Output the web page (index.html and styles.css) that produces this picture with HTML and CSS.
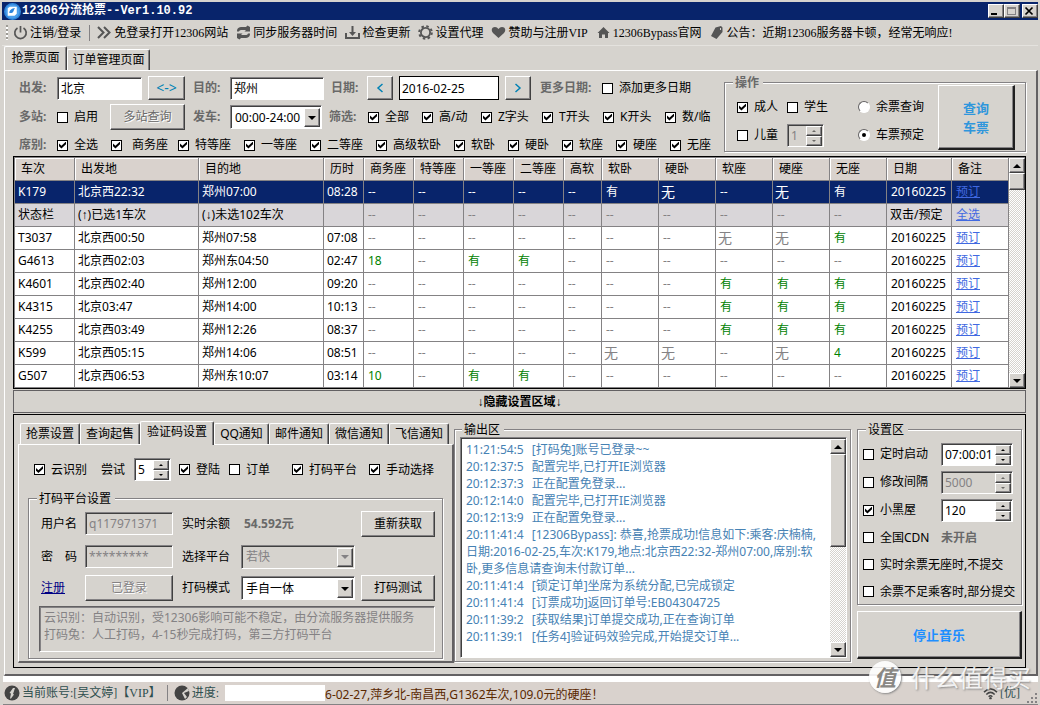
FILE: index.html
```html
<!DOCTYPE html>
<html lang="zh-CN">
<head>
<meta charset="utf-8">
<title>12306分流抢票--Ver1.10.92</title>
<link rel="stylesheet" href="styles.css">
</head>
<body>
<div class="window">
<header class="titlebar">
<svg class="app-icon" viewBox="0 0 16 16"><circle cx="8" cy="8" r="8" fill="#2f86dc"/><circle cx="8" cy="8" r="6.5" fill="#4b9eea"/><path d="M3.500 5l2-1.500H12v6.500l-2 2H3.500z" fill="#fff"/><path d="M5 9.500C5 7 7 5 10.500 5 9 6 9.500 9 7 9.500z" fill="#2f86dc"/></svg>
<h1>12306分流抢票--Ver1.10.92</h1>
<div class="win-buttons">
<button class="win-btn" aria-label="最小化"><svg viewBox="0 0 12 10"><path d="M2 7h6v2H2z"/></svg></button>
<button class="win-btn" aria-label="最大化" disabled><svg viewBox="0 0 12 10"><path d="M2 1h9v8H2zM3 3v5h7V3z" fill="#848284" fill-rule="evenodd"/></svg></button>
<button class="win-btn close" aria-label="关闭"><svg viewBox="0 0 12 10"><path d="M2.500 1.500l7 7M9.500 1.500l-7 7" stroke="#000" stroke-width="1.700"/></svg></button>
</div>
</header>
<nav class="toolbar">
<span class="grip"></span>
<button class="tool"><svg viewBox="0 0 15 15"><path d="M4.500 3a5.700 5.700 0 1 0 6 0M7.500 1v6.500" fill="none" stroke="#555" stroke-width="1.700"/></svg>注销/登录</button>
<span class="sep"></span>
<button class="tool"><svg viewBox="0 0 15 15"><path d="M1 2l5.500 5.500L1 13M7 2l5.500 5.500L7 13" fill="none" stroke="#555" stroke-width="2"/></svg>免登录打开12306网站</button>
<button class="tool"><svg viewBox="0 0 15 15"><path d="M1 6.500C1 3 3 2 6 2h4l1.500-1.500L14 2v4.500H8.500L10 5H6C4 5 3.500 5.500 3 6.500zM14 8.500c0 3.500-2 4.500-5 4.500H5l-1.500 1.500L1 13V8.500h5.500L5 10h4c2 0 2.500-.5 3-1.500z" fill="#555"/></svg>同步服务器时间</button>
<button class="tool"><svg viewBox="0 0 15 15"><path d="M6.500 1h2v6H11l-3.500 4L4 7h2.500zM0 8h2v4h11V8h2v6H0z" fill="#555"/></svg>检查更新</button>
<button class="tool"><svg viewBox="0 0 15 15"><circle cx="7.500" cy="7.500" r="4.600" fill="none" stroke="#555" stroke-width="1.800"/><circle cx="7.500" cy="7.500" r="6.300" fill="none" stroke="#555" stroke-width="2" stroke-dasharray="2.500 2.450"/></svg>设置代理</button>
<button class="tool"><svg viewBox="0 0 15 15"><path d="M7.500 13L2 8C-.5 5 1 2 4 2c1.500 0 2.500.7 3.500 2C8.500 2.700 9.500 2 11 2c3 0 4.500 3 2 6z" fill="#555"/></svg>赞助与注册VIP</button>
<button class="tool"><svg viewBox="0 0 15 15"><path d="M7.500 2L13.500 8H12v5H9V9.500H6V13H3V8H1.500z" fill="#555"/></svg>12306Bypass官网</button>
<button class="tool"><svg viewBox="0 0 15 15"><path d="M6.500 2.500L12 1l1.500 1.500V7L7.500 14 2 11z M11 3v2h1V3z" fill="#555" fill-rule="evenodd"/></svg>公告：近期12306服务器卡顿，经常无响应!</button>
</nav>
<div class="tabs main-tabs" role="tablist">
<button class="tab active" role="tab" aria-selected="true">抢票页面</button>
<button class="tab" role="tab">订单管理页面</button>
</div>
<main class="page">
<section class="filters">
<form class="filter-rows">
<div class="row row-route">
<label class="cap" for="from">出发:</label><input id="from" class="sunk w-city" value="北京">
<button type="button" class="btn swap">&lt;-&gt;</button>
<label class="cap" for="to">目的:</label><input id="to" class="sunk w-dest" value="郑州">
<label class="cap" for="date">日期:</label><button type="button" class="btn step" aria-label="前一天"><svg viewBox="0 0 8 10"><path d="M6.500 1L2 5l4.500 4"/></svg></button>
<input id="date" class="date" value="2016-02-25">
<button type="button" class="btn step" aria-label="后一天"><svg viewBox="0 0 8 10"><path d="M1.500 1L6 5 1.500 9"/></svg></button>
<span class="cap">更多日期:</span><label class="check"><input type="checkbox">添加更多日期</label>
</div>
<div class="row row-time">
<span class="cap">多站:</span><label class="check"><input type="checkbox">启用</label>
<button type="button" class="btn multi" disabled>多站查询</button>
<label class="cap" for="depart">发车:</label>
<span class="combo"><select id="depart"><option>00:00-24:00</option></select><i class="drop"></i></span>
<span class="cap">筛选:</span>
<label class="check"><input type="checkbox" checked>全部</label><label class="check"><input type="checkbox" checked>高/动</label><label class="check"><input type="checkbox" checked>Z字头</label><label class="check"><input type="checkbox" checked>T开头</label><label class="check"><input type="checkbox" checked>K开头</label><label class="check"><input type="checkbox" checked>数/临</label>
</div>
<div class="row row-seat">
<span class="cap">席别:</span>
<label class="check"><input type="checkbox" checked>全选</label><label class="check wide"><input type="checkbox" checked>商务座</label><label class="check"><input type="checkbox" checked>特等座</label><label class="check"><input type="checkbox" checked>一等座</label><label class="check"><input type="checkbox" checked>二等座</label><label class="check"><input type="checkbox" checked>高级软卧</label><label class="check"><input type="checkbox" checked>软卧</label><label class="check"><input type="checkbox" checked>硬卧</label><label class="check"><input type="checkbox" checked>软座</label><label class="check"><input type="checkbox" checked>硬座</label><label class="check"><input type="checkbox" checked>无座</label>
</div>
</form>
<fieldset class="group actions">
<legend class="gray">操作</legend>
<div class="action-grid">
<label class="check"><input type="checkbox" checked>成人</label><label class="check"><input type="checkbox">学生</label><label class="radio"><input type="radio" name="mode">余票查询</label>
<label class="check"><input type="checkbox">儿童</label><span class="spin off"><input value="1" disabled aria-label="儿童人数"><span class="arrows"><button aria-label="加"></button><button aria-label="减"></button></span></span><label class="radio"><input type="radio" name="mode" checked>车票预定</label>
</div>
<button class="btn query">查询<br>车票</button>
</fieldset>
</section>

<section class="grid-box">
<table class="trains">
<colgroup><col class="c60"><col class="c124"><col class="c125"><col class="c40"><col class="c50"><col class="c50"><col class="c50"><col class="c50"><col class="c38"><col class="c57"><col class="c57"><col class="c57"><col class="c57"><col class="c57"><col class="c65"><col class="c57"></colgroup>
<thead><tr><th>车次<th>出发地<th>目的地<th>历时<th>商务座<th>特等座<th>一等座<th>二等座<th>高软<th>软卧<th>硬卧<th>软座<th>硬座<th>无座<th>日期<th>备注</tr></thead>
<tbody>
<tr class="selected"><td>K179<td>北京西22:32<td>郑州07:00<td>08:28<td>--<td>--<td>--<td>--<td>--<td class="yes">有<td class="none">无<td>--<td class="none">无<td class="yes">有<td>20160225<td><a href="#">预订</a></tr>
<tr class="status"><td>状态栏<td>(↑)已选1车次<td>(↓)未选102车次<td><td class="na">--<td class="na">--<td class="na">--<td class="na">--<td class="na">--<td class="na">--<td class="na">--<td class="na">--<td class="na">--<td class="na">--<td class="tight">双击/预定<td><a href="#">全选</a></tr>
<tr><td>T3037<td>北京西00:50<td>郑州07:58<td>07:08<td class="na">--<td class="na">--<td class="na">--<td class="na">--<td class="na">--<td class="na">--<td class="na">--<td class="none">无<td class="none">无<td class="yes">有<td>20160225<td><a href="#">预订</a></tr>
<tr><td>G4613<td>北京西02:03<td>郑州东04:50<td>02:47<td class="yes">18<td class="na">--<td class="yes">有<td class="yes">有<td class="na">--<td class="na">--<td class="na">--<td class="na">--<td class="na">--<td class="na">--<td>20160225<td><a href="#">预订</a></tr>
<tr><td>K4601<td>北京西02:40<td>郑州12:00<td>09:20<td class="na">--<td class="na">--<td class="na">--<td class="na">--<td class="na">--<td class="na">--<td class="na">--<td class="yes">有<td class="yes">有<td class="yes">有<td>20160225<td><a href="#">预订</a></tr>
<tr><td>K4315<td>北京03:47<td>郑州14:00<td>10:13<td class="na">--<td class="na">--<td class="na">--<td class="na">--<td class="na">--<td class="na">--<td class="na">--<td class="yes">有<td class="yes">有<td class="yes">有<td>20160225<td><a href="#">预订</a></tr>
<tr><td>K4255<td>北京西03:49<td>郑州12:26<td>08:37<td class="na">--<td class="na">--<td class="na">--<td class="na">--<td class="na">--<td class="na">--<td class="na">--<td class="yes">有<td class="yes">有<td class="yes">有<td>20160225<td><a href="#">预订</a></tr>
<tr><td>K599<td>北京西05:15<td>郑州14:06<td>08:51<td class="na">--<td class="na">--<td class="na">--<td class="na">--<td class="na">--<td class="none">无<td class="none">无<td class="na">--<td class="none">无<td class="yes">4<td>20160225<td><a href="#">预订</a></tr>
<tr><td>G507<td>北京西06:53<td>郑州东10:07<td>03:14<td class="yes">10<td class="na">--<td class="yes">有<td class="yes">有<td class="na">--<td class="na">--<td class="na">--<td class="na">--<td class="na">--<td class="na">--<td>20160225<td><a href="#">预订</a></tr>
</tbody>
</table>
<div class="scrollbar"><button class="sb up" aria-label="向上"></button><span class="thumb short"></span><button class="sb down" aria-label="向下"></button></div>
</section>

<button class="collapse">↓隐藏设置区域↓</button>

<section class="bottom">
<div class="settings-tabs">
<div class="tabs sub-tabs" role="tablist">
<button class="tab" role="tab">抢票设置</button><button class="tab" role="tab">查询起售</button><button class="tab active" role="tab" aria-selected="true">验证码设置</button><button class="tab" role="tab">QQ通知</button><button class="tab" role="tab">邮件通知</button><button class="tab" role="tab">微信通知</button><button class="tab" role="tab">飞信通知</button>
</div>
<div class="sub-page">
<div class="row row-ocr">
<label class="check"><input type="checkbox" checked>云识别</label><label for="tries">尝试</label>
<span class="spin"><input id="tries" value="5"><span class="arrows"><button aria-label="加"></button><button aria-label="减"></button></span></span>
<label class="check"><input type="checkbox" checked>登陆</label><label class="check"><input type="checkbox">订单</label><label class="check"><input type="checkbox" checked>打码平台</label><label class="check"><input type="checkbox" checked>手动选择</label>
</div>
<fieldset class="group platform">
<legend>打码平台设置</legend>
<div class="form-grid">
<label for="user">用户名</label><input id="user" class="sunk" value="q117971371" disabled><span>实时余额</span><strong class="gray">54.592元</strong><button class="btn">重新获取</button>
<label for="pwd">密　码</label><input id="pwd" class="sunk" value="*********" disabled><label for="plat">选择平台</label><span class="combo off"><select id="plat" disabled><option>若快</option></select><i class="drop"></i></span><span></span>
<a href="#" class="register">注册</a><button class="btn" disabled>已登录</button><label for="mode">打码模式</label><span class="combo"><select id="mode"><option>手自一体</option></select><i class="drop"></i></span><button class="btn">打码测试</button>
</div>
<div class="note">云识别：自动识别，受12306影响可能不稳定，由分流服务器提供服务<br>打码兔：人工打码，4-15秒完成打码，第三方打码平台</div>
</fieldset>
</div>
</div>
<fieldset class="group output">
<legend>输出区</legend>
<div class="log-box">
<div class="log">
<p><time>11:21:54:5</time>[打码兔]账号已登录~~</p>
<p><time>20:12:37:5</time>配置完毕,已打开IE浏览器</p>
<p><time>20:12:37:3</time>正在配置免登录...</p>
<p><time>20:12:14:0</time>配置完毕,已打开IE浏览器</p>
<p><time>20:12:13:9</time>正在配置免登录...</p>
<p><time>20:11:41:4</time>[12306Bypass]: 恭喜,抢票成功!信息如下:乘客:庆楠楠,<br>日期:2016-02-25,车次:K179,地点:北京西22:32-郑州07:00,席别:软<br>卧,更多信息请查询未付款订单...</p>
<p><time>20:11:41:4</time>[锁定订单]坐席为系统分配,已完成锁定</p>
<p><time>20:11:41:4</time>[订票成功]返回订单号:EB04304725</p>
<p><time>20:11:39:2</time>[获取结果]订单提交成功,正在查询订单</p>
<p><time>20:11:39:1</time>[任务4]验证码效验完成,开始提交订单...</p>
</div>
<div class="scrollbar"><button class="sb up" aria-label="向上"></button><span class="thumb long"></span><button class="sb down" aria-label="向下"></button></div>
</div>
</fieldset>
<div class="side">
<fieldset class="group options">
<legend>设置区</legend>
<div class="option"><label class="check"><input type="checkbox">定时启动</label><span class="spin"><input value="07:00:01" aria-label="启动时间"><span class="arrows"><button aria-label="加"></button><button aria-label="减"></button></span></span></div>
<div class="option"><label class="check"><input type="checkbox">修改间隔</label><span class="spin off"><input value="5000" disabled aria-label="间隔"><span class="arrows"><button aria-label="加"></button><button aria-label="减"></button></span></span></div>
<div class="option"><label class="check"><input type="checkbox" checked>小黑屋</label><span class="spin"><input value="120" aria-label="小黑屋时间"><span class="arrows"><button aria-label="加"></button><button aria-label="减"></button></span></span></div>
<div class="option low"><label class="check"><input type="checkbox">全国CDN</label><strong class="gray">未开启</strong></div>
<div class="option low"><label class="check"><input type="checkbox">实时余票无座时,不提交</label></div>
<div class="option low"><label class="check"><input type="checkbox">余票不足乘客时,部分提交</label></div>
</fieldset>
<button class="btn music">停止音乐</button>
</div>
</section>
</main>
<footer class="statusbar">
<svg class="st-icon" viewBox="0 0 16 16"><circle cx="8" cy="8" r="7.500" fill="#444"/><path d="M9 3h2L9 9l1 .5-3 4H6l1-5-1.500-.5z" fill="#d6d3ce"/></svg>
<span class="teal account">当前账号:[吴文婷]【VIP】</span><span class="sep"></span>
<svg class="st-icon" viewBox="0 0 16 16"><circle cx="8" cy="8" r="7.500" fill="#444"/><path d="M8 8l6-5 1 3-5 2 3 4-2 2z" fill="#d6d3ce"/></svg>
<span class="teal">进度:</span><span class="progress"></span>
<div class="ticker"><span>6-02-27,萍乡北-南昌西,G1362车次,109.0元的硬座！</span></div>
<svg class="wifi" viewBox="0 0 16 14"><g fill="none" stroke="#444" stroke-width="1.600"><path d="M1 5.500q7-7 14 0M3.500 8q4.500-4.500 9 0M6 10.500q2-2 4 0"/></g><circle cx="8" cy="12" r="1.300" fill="#444"/></svg>
<span class="teal">[优]</span>
<svg class="size-grip" viewBox="0 0 12 12"><path d="M9 1h2v2H9zM5 5h2v2H5zM9 5h2v2H9zM1 9h2v2H1zM5 9h2v2H5zM9 9h2v2H9z" fill="#848284"/></svg>
</footer>
<div class="watermark"><span class="mark">值</span>什么值得买</div>
</div>
</body>
</html>
```
FILE: styles.css
```css
* { box-sizing: border-box; }

body {
  margin: 0;
  background: #d6d3ce;
  color: #000;
  font: 12px/16px "Noto Sans", "Liberation Sans", "Noto Sans CJK SC", sans-serif;
}

button, input, select { font: inherit; color: inherit; margin: 0; border-radius: 0; }
button { padding: 0; }
p { margin: 0; }

.window {
  position: relative;
  display: flex;
  flex-direction: column;
  min-height: 100vh;
  padding: 2px 2px 0 2px;
}

/* title bar */
.titlebar {
  display: flex;
  align-items: center;
  height: 18px;
  padding-left: 2px;
  gap: 1px;
  background: #08246b;
  color: #fff;
}
.app-icon { width: 17px; height: 17px; }
.titlebar h1 {
  flex: 1;
  margin: 0;
  font: bold 12px/16px "Liberation Mono", "Noto Sans CJK SC", monospace;
}
.win-buttons { display: flex; }
.win-btn {
  width: 16px;
  height: 14px;
  border: 1px solid;
  border-color: #fff #404040 #404040 #fff;
  background: #d6d3ce;
  box-shadow: inset -1px -1px #848284;
}
.win-btn svg { display: block; width: 12px; height: 10px; }
.close { margin-left: 2px; }

/* toolbar */
.toolbar {
  display: flex;
  align-items: center;
  height: 26px;
  gap: 8px;
  padding-left: 4px;
  border-bottom: 1px solid #e4e2de;
  font-family: "Liberation Serif", "Noto Sans CJK SC", serif;
}
.grip { width: 2px; height: 15px; background: repeating-linear-gradient(#9c9a94 0 2px, #fff 2px 4px); margin-right: -3px; }
.tool { display: flex; align-items: center; gap: 2px; border: 0; background: none; white-space: nowrap; }
.tool svg { width: 15px; height: 15px; }
.sep { width: 1px; height: 16px; background: #848284; }
.toolbar .sep { margin-right: -1px; }

/* tabs */
.tabs { display: flex; align-items: flex-end; }
.tab {
  border: 1px solid;
  border-color: #fff #404040 transparent #fff;
  border-bottom: 0;
  background: #d6d3ce;
  box-shadow: inset -1px 0 #848284;
  border-radius: 2px 2px 0 0;
  white-space: nowrap;
}
.main-tabs { height: 24px; padding-left: 2px; }
.main-tabs .tab { height: 21px; width: 83px; }
.main-tabs .active { height: 25px; width: 63px; margin-bottom: -1px; padding-bottom: 3px; }

.page {
  display: flex;
  flex-direction: column;
  margin-left: 2px;
  padding: 5px 10px 6px 8px;
  border: solid;
  border-width: 1px 2px 2px 1px;
  border-color: #fff #636163 #636163 #fff;
}

/* filters */
.filters { display: flex; justify-content: space-between; height: 80px; }
.filter-rows { padding-left: 6px; }
.row { display: grid; align-items: center; white-space: nowrap; }
.row-route { height: 24px; grid-template-columns: 38px 91px 45px 37px 101px 36px 32px 106px 35px 62px auto; }
.row-time { height: 34px; grid-template-columns: 38px 53px 83px 37px 99px 39px 54px 59px 61px 61px 62px auto; }
.row-seat { height: 22px; grid-template-columns: 38px 54px 67px 66px 66px 66px 78px 54px 54px 54px 54px auto; }
.cap, .gray { color: #696969; font-weight: bold; }

.check, .radio { display: flex; align-items: center; gap: 6px; white-space: nowrap; }
.check.wide { gap: 10px; }
.check input {
  appearance: none;
  display: grid;
  place-items: center;
  flex: none;
  width: 11px;
  height: 11px;
  border: 1px solid #000;
  background: #fff;
}
.check input:checked::before {
  content: "";
  width: 7px;
  height: 7px;
  background: #000;
  clip-path: polygon(0 30%, 35% 62%, 100% 0, 100% 40%, 35% 100%, 0 68%);
}
.radio input {
  appearance: none;
  display: grid;
  place-items: center;
  width: 12px;
  height: 12px;
  border: 1px solid;
  border-color: #636163 #fff #fff #636163;
  border-radius: 50%;
  background: #fff;
}
.radio input:checked::before { content: ""; width: 4px; height: 4px; border-radius: 50%; background: #000; }

.sunk, .spin, .combo {
  border: 1px solid;
  border-color: #848284 #fff #fff #848284;
  box-shadow: inset 1px 1px #404040;
  background: #fff;
}
.sunk { height: 23px; min-width: 0; padding: 0 3px; }
.sunk:disabled { background: #d6d3ce; color: #848284; }
.w-city { width: 85px; }
.w-dest { width: 94px; }
.date { width: 100px; height: 24px; padding: 0 2px; border: 1px solid #000; background: #fff; }

.btn {
  height: 24px;
  border: 1px solid;
  border-color: #fff #404040 #404040 #fff;
  background: #d6d3ce;
  box-shadow: inset -1px -1px #848284;
}
.btn:disabled { color: #848284; text-shadow: 1px 1px #fff; }
.swap { width: 37px; color: #0082b5; font: 14px/16px "Noto Sans", sans-serif; }
.step { display: grid; place-items: center; width: 26px; }
.step svg { width: 8px; height: 10px; fill: none; stroke: #0082b5; stroke-width: 1.5; }
.btn.multi { width: 75px; height: 26px; color: #696969; }

.combo { display: flex; width: 92px; height: 24px; padding: 2px 1px 1px 2px; }
.combo select { appearance: none; flex: 1; min-width: 0; border: 0; background: none; padding: 0 2px; }
.combo.off { background: #d6d3ce; color: #848284; }
.combo select:disabled { opacity: 1; color: #848284; }
.drop, .sb, .thumb, .arrows button {
  display: grid;
  place-items: center;
  border: 1px solid;
  border-color: #fff #404040 #404040 #fff;
  box-shadow: inset -1px -1px #848284;
  background: #d6d3ce;
}
.drop { width: 16px; }
.drop::before, .sb::before, .arrows button::before {
  content: "";
  border: solid transparent;
  border-width: 4px 4px 0;
  border-top-color: #000;
}
.off .drop::before { border-top-color: #848284; }
.sb.up::before { border-width: 0 4px 4px; border-bottom-color: #000; }
.arrows button::before { border-width: 2px 2px 0; }
.arrows button:first-child::before { border-width: 0 2px 2px; border-bottom-color: #000; }

.spin { display: flex; width: 37px; height: 23px; padding: 1px 1px 0 1px; }
.spin > input { flex: 1; min-width: 0; width: 0; border: 0; background: none; padding: 0 2px; }
.spin.off { background: #d6d3ce; color: #848284; }
.arrows { display: flex; flex-direction: column; width: 16px; }
.arrows button { flex: 1; min-height: 0; }
.spin.off .arrows button::before { opacity: .5; }

/* group boxes */
.group {
  min-width: 0;
  margin: 0;
  padding: 0;
  border: 1px solid #848284;
  box-shadow: 1px 1px #fff, inset 1px 1px #fff;
}
.group legend { margin-left: 8px; padding: 0 4px 0 2px; background: #d6d3ce; height: 13px; line-height: 13px; }
.actions { width: 302px; height: 76px; }
.action-grid {
  float: left;
  display: grid;
  grid-template-columns: 50px 71px 80px;
  grid-template-rows: 28px 28px;
  align-items: center;
  padding: 4px 0 0 12px;
}
.query {
  float: left;
  width: 77px;
  height: 65px;
  margin-top: -4px;
  border-right: 2px solid #202020;
  border-bottom: 2px solid #202020;
  color: #2f96dc;
  font: bold 13px/19px "Noto Sans CJK SC", sans-serif;
}

/* train table */
.grid-box { display: flex; height: 233px; border: 1px solid #000; padding: 1px 0 0 1px; background: #fff; box-shadow: inset 1px 1px #848284; }
.trains { flex: 1; width: 0; table-layout: fixed; border-collapse: separate; border-spacing: 0; height: 230px; }
.trains th, .trains td {
  overflow: hidden;
  padding: 0 0 0 3px;
  border-right: 1px solid #848284;
  border-bottom: 1px solid #848284;
  text-align: left;
  white-space: nowrap;
}
.trains th { height: 23px; padding-left: 6px; background: #d9d2cd; font-weight: normal; box-shadow: inset 1px 1px #fff; }
.trains td { height: 23px; }
.trains td:nth-child(n+5) { padding-left: 4px; }
.trains td.tight { padding-left: 3px; }
.trains td.none { padding-left: 2px; font-size: 14px; color: #848284; }
.trains td.na { color: #848284; }
.trains td.yes { color: #008200; }
.trains .selected td, .trains .selected td.yes, .trains .selected td.none { background: #08246b; color: #fff; }
.trains .status td { background: #d9d6d9; }
.trains a { color: #4169e1; }
.c38 { width: 38px; } .c40 { width: 40px; } .c50 { width: 50px; } .c57 { width: 57px; }
.c60 { width: 60px; } .c65 { width: 65px; } .c124 { width: 124px; } .c125 { width: 125px; }

.scrollbar {
  display: flex;
  flex-direction: column;
  width: 16px;
  background: repeating-conic-gradient(#fff 0 25%, #d6d3ce 0 50%) 0 0 / 2px 2px;
}
.sb { height: 15px; flex: none; }
.sb.down { margin-top: auto; }
.thumb.short { height: 17px; }
.thumb.long { height: 93px; }

.collapse { height: 23px; margin: 1px 0; border: 1px solid #636163; background: none; font-weight: bold; }

/* bottom area */
.bottom { display: flex; border: 1px solid #000; padding: 6px 3px 3px 4px; }
.settings-tabs { flex: 0 0 435px; }
.sub-tabs { height: 23px; padding-left: 2px; }
.sub-tabs .tab { height: 21px; width: 60px; }
.sub-tabs .tab:nth-child(4) { width: 55px; }
.sub-tabs .active { width: 74px; height: 24px; margin-bottom: -1px; padding-bottom: 3px; }
.sub-page {
  height: 219px;
  padding: 13px 9px 0 9px;
  border: solid;
  border-width: 1px 2px 2px 1px;
  border-color: #fff #636163 #636163 #fff;
}
.row-ocr { height: 23px; padding-left: 6px; grid-template-columns: 67px 33px 45px 50px 63px 77px auto; }
.platform { margin-top: 11px; height: 167px; padding: 0 7px 0 10px; }
.platform legend { margin-left: -2px; }
.form-grid {
  display: grid;
  grid-template-columns: 44px 88px 9px 59px 114px 6px 74px;
  grid-template-rows: 33px 33px 30px;
  align-items: center;
  white-space: nowrap;
  padding: 2px 0 0 2px;
}
.form-grid > :nth-child(5n+3) { grid-column: 4; }
.form-grid > :nth-child(5n+5) { grid-column: 7; }
.form-grid .combo { width: 114px; }
.form-grid .btn { height: 26px; }
.form-grid strong { padding-left: 3px; }
.register { color: #000084; }
.note {
  height: 46px;
  margin-top: 3px;
  padding: 2px 4px;
  border: 1px solid;
  border-color: #636163 #fff #fff #636163;
  box-shadow: inset 1px 1px #848284;
  color: #848284;
  line-height: 17px;
  white-space: nowrap;
}

.output { flex: 1; margin: 2px 0 2px 0; padding: 1px 3px 2px 5px; height: 239px; }
.output legend { margin-left: 2px; }
.log-box {
  display: flex;
  height: 221px;
  border: 1px solid;
  border-color: #848284 #fff #fff #848284;
  box-shadow: inset 1px 1px #404040;
  background: #fff;
  padding: 1px 0 0 1px;
}
.log { flex: 1; min-width: 0; overflow: hidden; padding: 2px 4px; color: #4682b4; line-height: 17px; white-space: nowrap; }
.log time { margin-right: 8px; }

.side { display: flex; flex-direction: column; width: 165px; margin: 2px 0 2px 6px; }
.options { height: 182px; padding: 4px 0 0 5px; }
.options legend { margin-left: 3px; }
.option { display: grid; grid-template-columns: 78px 72px; align-items: center; height: 28px; white-space: nowrap; }
.option .spin { width: 72px; }
.option.low { height: 27px; }
.music {
  height: 48px;
  margin-top: 6px;
  border-right: 2px solid #202020;
  border-bottom: 2px solid #202020;
  color: #1e8fff;
  font: bold 13px/19px "Noto Sans CJK SC", sans-serif;
}

/* status bar */
.statusbar {
  display: flex;
  align-items: center;
  gap: 2px;
  margin-left: 1px;
  padding-left: 1px;
  height: 29px;
  border-top: 6px solid #fff;
  border-bottom: 1px solid #848284;
  background: #d9d2cd;
  font-family: "Liberation Serif", "Noto Sans CJK SC", serif;
}
.st-icon { width: 16px; height: 16px; flex: none; }
.statusbar .sep { margin: 0 4px; height: 16px; }
.teal { color: #2f4f4f; white-space: nowrap; }
.progress { width: 100px; height: 16px; background: #fff; margin-left: 4px; }
.ticker { flex: 1; min-width: 0; overflow: hidden; margin-left: -2px; color: #5a2800; font-family: "Noto Sans", "Noto Sans CJK SC", sans-serif; white-space: nowrap; padding-top: 3px; }
.wifi { width: 15px; height: 13px; }
.size-grip { width: 12px; height: 12px; align-self: flex-end; margin-left: 4px; }

.watermark {
  position: absolute;
  right: 9px;
  bottom: 11px;
  display: flex;
  align-items: center;
  gap: 10px;
  color: rgba(255, 255, 255, .85);
  font: 24px/34px "Noto Sans CJK SC", sans-serif;
  text-shadow: 1px 1px 2px #8a8a8a;
  pointer-events: none;
}
.mark {
  width: 32px;
  height: 32px;
  border-radius: 50%;
  background: rgba(255, 255, 255, .9);
  box-shadow: 1px 1px 2px #8a8a8a;
  color: #8a8884;
  font: italic bold 22px/30px "Noto Sans CJK SC", sans-serif;
  text-align: center;
  text-shadow: none;
}
```
